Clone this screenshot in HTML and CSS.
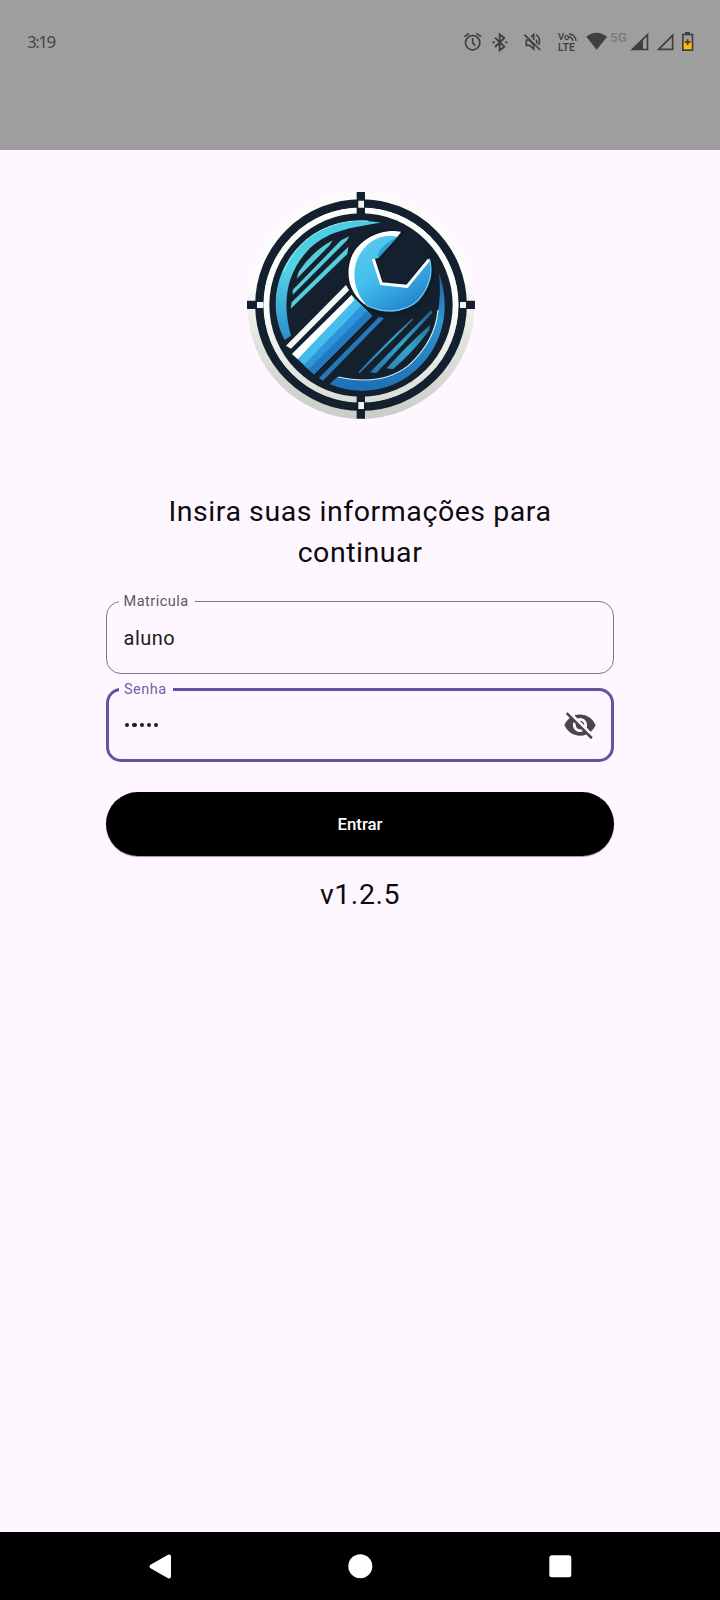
FILE: index.html
```html
<!DOCTYPE html>
<html lang="pt-BR">
<head>
<meta charset="utf-8">
<title>Login</title>
<link rel="stylesheet" href="styles.css">
</head>
<body>
<div class="screen">
  <header class="top">
    <span class="clock">3:19</span>
    <div class="status">
      <svg width="37" height="50" viewBox="0 0 111 150" fill="none" stroke="#3f3f3f" stroke-width="5"><circle cx="68" cy="68" r="21.500"/><path d="M68 54v15l8 8M43 50l14-10M93 50L79 40"/></svg>
      <svg width="29" height="50" viewBox="111 0 87 150" fill="none" stroke="#3f3f3f" stroke-width="5.500"><path d="M135 53l28 27-14 11V43l14 11-28 27"/><circle cx="131" cy="67" r="3.500" fill="#3f3f3f" stroke="none"/><circle cx="169" cy="67" r="3.500" fill="#3f3f3f" stroke="none"/></svg>
      <svg width="33" height="50" viewBox="198 0 99 150" fill="none" stroke="#3f3f3f" stroke-width="5"><path d="M223 44l48 46"/><path d="M229 60h8l14 14v13L239 76H229zM243 51l8-7v16M258 59q4 6 2 12M258 44q16 11 8 31"/></svg>
      <div class="volte"><span class="vo">Vo<svg width="8" height="8" viewBox="0 0 8 8" fill="none" stroke="#3f3f3f" stroke-width="1.300"><path d="M0 1q6 0 7 7M0 4q3 0 4 4"/></svg></span><span>LTE</span></div>
      <svg width="24" height="50" viewBox="30 0 72 150"><path d="M34 50Q64 27 96 50L67 87q-2 3-4 0z" fill="#3f3f3f"/></svg>
      <span class="net">5G</span>
      <svg width="25" height="50" viewBox="162 0 75 150"><path d="M166 91L220 38v53z" fill="#3f3f3f"/><path d="M204 61l11-11v36h-11z" fill="#9e9e9e"/></svg>
      <svg width="25" height="50" viewBox="237 0 75 150"><path d="M251 88L293 46v42z" fill="none" stroke="#3f3f3f" stroke-width="5"/></svg>
      <svg width="17" height="50" viewBox="312 0 51 150"><path d="M330 36h15v5h10v52h-34V41h9z" fill="#3f3f3f"/><path d="M326 46h24v15h-24z" fill="#9e9e9e"/><path d="M326 61h24v27h-24z" fill="#fbbd08"/><path d="M338 58v17M329 66.500h18" stroke="#3f3f3f" stroke-width="5"/></svg>
    </div>
  </header>
  <main class="content">
    <svg class="logo" width="250" height="250" viewBox="0 0 750 750">
      <defs>
        <linearGradient id="rim" x1="0" y1="0" x2="0" y2="1"><stop offset="0.400" stop-color="#fbfcfa"/><stop offset="0.650" stop-color="#e2e5df"/><stop offset="1" stop-color="#c9ccc7"/></linearGradient>
        <linearGradient id="ring" x1="0" y1="0" x2="0" y2="1"><stop offset="0.500" stop-color="#fcfcfb"/><stop offset="1" stop-color="#d9dcd7"/></linearGradient>
        <linearGradient id="crescent" x1="0" y1="0" x2="0" y2="1"><stop offset="0" stop-color="#4bcbe5"/><stop offset="0.400" stop-color="#55d2e6"/><stop offset="1" stop-color="#2a8ecb"/></linearGradient>
        <linearGradient id="lower" x1="0" y1="0" x2="0" y2="1"><stop offset="0" stop-color="#1b639c"/><stop offset="0.400" stop-color="#3096d4"/><stop offset="1" stop-color="#1d70b5"/></linearGradient>
        <linearGradient id="head" x1="0" y1="0" x2="0.600" y2="1"><stop offset="0" stop-color="#62cee9"/><stop offset="0.550" stop-color="#43bfee"/><stop offset="1" stop-color="#2589ce"/></linearGradient>
        <linearGradient id="stripe" gradientUnits="userSpaceOnUse" x1="570" y1="390" x2="380" y2="580"><stop offset="0" stop-color="#236896"/><stop offset="0.450" stop-color="#35a5c6"/><stop offset="1" stop-color="#246ea7"/></linearGradient>
        <clipPath id="disc"><circle cx="378" cy="376" r="257"/></clipPath>
      </defs>
      <circle cx="378" cy="376" r="341" fill="url(#rim)"/>
      <circle cx="378" cy="375" r="305" fill="none" stroke="#14202d" stroke-width="25"/>
      <circle cx="378" cy="375" r="292" fill="url(#ring)"/>
      <circle cx="378" cy="375" r="275" fill="#14202d"/>
      <path d="M365 36h25v66h-25zM365 645h25v71h-25zM36 362h47v25H36zM674 362h46v25h-46z" fill="#14202d"/>
      <path d="M370 62h17v21h-17zM370 666h17v21h-17zM66 366h19v18H66zM675 366h18v18h-18z" fill="#f4f5f2"/>
      <g clip-path="url(#disc)">
        <path d="M438 128C310 106 190 160 142 270C110 345 118 420 149 480L168 467C143 377 149 290 215 215C270 154 345 142 438 128z" fill="url(#crescent)"/>
        <path d="M400 123C280 116 185 175 146 275" fill="none" stroke="#aaf2f2" stroke-width="3"/>
        <path d="M612 280C650 385 624 497 543 570C466 640 367 647 284 613L307 590C392 612 468 598 520 558C590 500 625 400 612 280z" fill="url(#lower)"/>
        <path d="M310 591C400 611 468 598 520 557C575 507 604 450 609 390" fill="none" stroke="#d3eff8" stroke-width="3.500"/>
        <path d="M185 296L191 275Q230 215 293 181L284 196zM173 344V330L318 181 343 169 335 182zM167 386L170 367 340 200 337 222z" fill="#55cddb"/>
        <path d="M536 417L374 580 370 576Q450 490 530 418zM588 391L405 577 424 579 592 398zM585 435Q520 492 455 565L474 568Q540 510 583 450z" fill="url(#stripe)"/>
        <path d="M333 315L342 331 168 506 153 497z" fill="#f4f5f7"/>
        <path d="M171 522L350 345 411 407 237 583z" fill="#45bdec"/>
        <path d="M171 522L350 345 358 360 188 537z" fill="#fff"/>
        <path d="M206 555L378 378 411 407 237 583z" fill="#2d95d9"/>
        <path d="M221 568L395 394 411 407 237 583z" fill="#2279c0"/>
        <path d="M252 594L432 411 447 415 264 602z" fill="#2878b7"/>
      </g>
      <path d="M496 160C440 145 372 178 351 234C331 292 357 359 408 386C460 413 535 399 567 349C594 308 595 266 584 235L517 321 438 312 415 238 429 235z" fill="#101b2a" stroke="#101b2a" stroke-width="15"/>
      <path d="M498 158C440 146 374 179 352 234C331 292 357 356 408 382C460 408 532 392 563 344C588 306 592 267 583 236L516 319 439 311 415 237 429 235z" fill="url(#head)"/>
      <path d="M395 376C460 408 532 392 563 344C588 306 592 267 583 236" fill="none" stroke="#65c6ed" stroke-width="4"/>
      <path d="M489 169C443 196 427 212 429 235L498 160z" fill="#2e9ed2"/>
      <path d="M498 155C438 144 370 178 348 234C328 292 348 349 400 380C364 349 347 290 366 240C386 190 436 157 486 170z" fill="#fff"/>
      <path d="M415 237L439 311 516 319 582 239" fill="none" stroke="#fff" stroke-width="9"/>
    </svg>
    <h1 class="title">Insira suas informações para continuar</h1>
    <fieldset class="field">
      <legend>Matricula</legend>
      <div class="row"><span class="value">aluno</span></div>
    </fieldset>
    <fieldset class="field focused">
      <legend>Senha</legend>
      <div class="row">
        <span class="value dots"><i></i><i></i><i></i><i></i><i></i></span>
        <svg class="eye" width="34" height="34" viewBox="0 0 24 24" fill="#49454f"><path d="M12 7c2.760 0 5 2.240 5 5 0 .65-.13 1.260-.36 1.830l2.920 2.920c1.510-1.260 2.700-2.890 3.430-4.750-1.730-4.390-6-7.500-11-7.500-1.400 0-2.740.25-3.980.7l2.160 2.160C10.740 7.130 11.350 7 12 7zM2 4.270l2.280 2.280.46.46C3.080 8.300 1.780 10.020 1 12c1.730 4.390 6 7.500 11 7.500 1.550 0 3.030-.3 4.380-.84l.42.42L19.730 22 21 20.730 3.270 3 2 4.270zM7.530 9.800l1.550 1.550c-.05.21-.08.43-.08.65 0 1.660 1.340 3 3 3 .22 0 .44-.03.65-.08l1.550 1.550c-.67.33-1.410.53-2.200.53-2.760 0-5-2.240-5-5 0-.79.2-1.530.53-2.200zm4.310-.78l3.150 3.150.02-.16c0-1.660-1.340-3-3-3l-.17.01z"/></svg>
      </div>
    </fieldset>
    <button class="submit">Entrar</button>
    <p class="version">v1.2.5</p>
  </main>
  <nav class="navbar">
    <svg width="200" height="68" viewBox="0 0 200 68"><path d="M91.500 34.500L109 24.500V44.500z" class="key"/></svg>
    <svg width="200" height="68" viewBox="0 0 200 68"><circle cx="100.300" cy="34.300" r="12" fill="#fff"/></svg>
    <svg width="200" height="68" viewBox="0 0 200 68"><rect x="89.300" y="23.300" width="22" height="22" rx="2.500" fill="#fff"/></svg>
  </nav>
</div>
</body>
</html>
```
FILE: styles.css
```css
* { box-sizing: border-box; }
body { margin: 0; font-family: Roboto, "Liberation Sans", sans-serif; }
.screen {
  width: 720px;
  height: 1600px;
  display: flex;
  flex-direction: column;
  background: #fef7ff;
  overflow: hidden;
}
.top {
  height: 150px;
  flex: none;
  padding: 20px 15px 0 27px;
  display: flex;
  align-items: flex-start;
  justify-content: space-between;
  background: #9e9e9e;
}
.clock {
  font: 400 17px/43px "Noto Sans", sans-serif;
  letter-spacing: -1.5px;
  color: #464646;
}
.status { display: flex; align-items: flex-start; width: 255px; }
.status > * { flex: none; }
.volte {
  width: 36px;
  height: 50px;
  padding: 11px 0 0 9px;
  display: flex;
  flex-direction: column;
  font: 600 10.500px/12px Roboto, sans-serif;
  color: #3f3f3f;
}
.volte .vo { font-size: 9.500px; line-height: 11px; white-space: nowrap; }
.volte svg { vertical-align: top; margin-top: 2px; }
.net {
  width: 20px;
  padding-left: 1px;
  font: 500 13.500px/35px Roboto, sans-serif;
  color: #7c7c7c;
}
.content {
  flex: 1;
  display: flex;
  flex-direction: column;
  align-items: center;
  padding: 30px 106px 0;
}
.logo { display: block; flex: none; }
.title {
  width: 420px;
  margin: 61px 0 0;
  font-size: 28.500px;
  font-weight: 400;
  line-height: 41px;
  letter-spacing: 0.550px;
  text-align: center;
  color: #0d0b0e;
}
.field {
  width: 508px;
  height: 83px;
  min-width: 0;
  margin: 18px 0 0;
  padding: 0 16.500px;
  border: 1.500px solid #7e7882;
  border-radius: 15px;
}
.field legend {
  margin-left: -5px;
  padding: 1px 6px 0 5px;
  height: 20px;
  font-size: 14.500px;
  line-height: 20px;
  letter-spacing: 0.500px;
  color: #5b5661;
}
.row {
  height: 53px;
  display: flex;
  align-items: center;
  justify-content: space-between;
}
.value { font-size: 20px; letter-spacing: 0.500px; color: #1d1b20; }
.focused { margin-top: 5px; padding: 0 14px 0 15px; border: 3px solid #65539f; }
.focused .row { height: 52px; }
.focused legend { color: #7461ab; }
.dots { display: flex; gap: 3px; padding-left: 1px; }
.dots i { width: 4.300px; height: 4.300px; border-radius: 50%; background: #1d1b20; }
.submit {
  width: 508px;
  height: 64px;
  margin: 30px 0 0;
  border: 0;
  border-radius: 32px;
  background: #000;
  color: #fff;
  font: 500 16.800px Roboto, sans-serif;
  box-shadow: 0 1px 1px rgba(0, 0, 0, 0.4);
}
.version {
  margin: 18px 0 0;
  font-size: 28.500px;
  line-height: 41px;
  letter-spacing: 0.550px;
  color: #0d0b0e;
}
.navbar {
  height: 68px;
  flex: none;
  display: flex;
  justify-content: center;
  background: #000;
}
.key { fill: #fff; stroke: #fff; stroke-width: 4px; stroke-linejoin: round; }
.navbar svg { display: block; }
```
